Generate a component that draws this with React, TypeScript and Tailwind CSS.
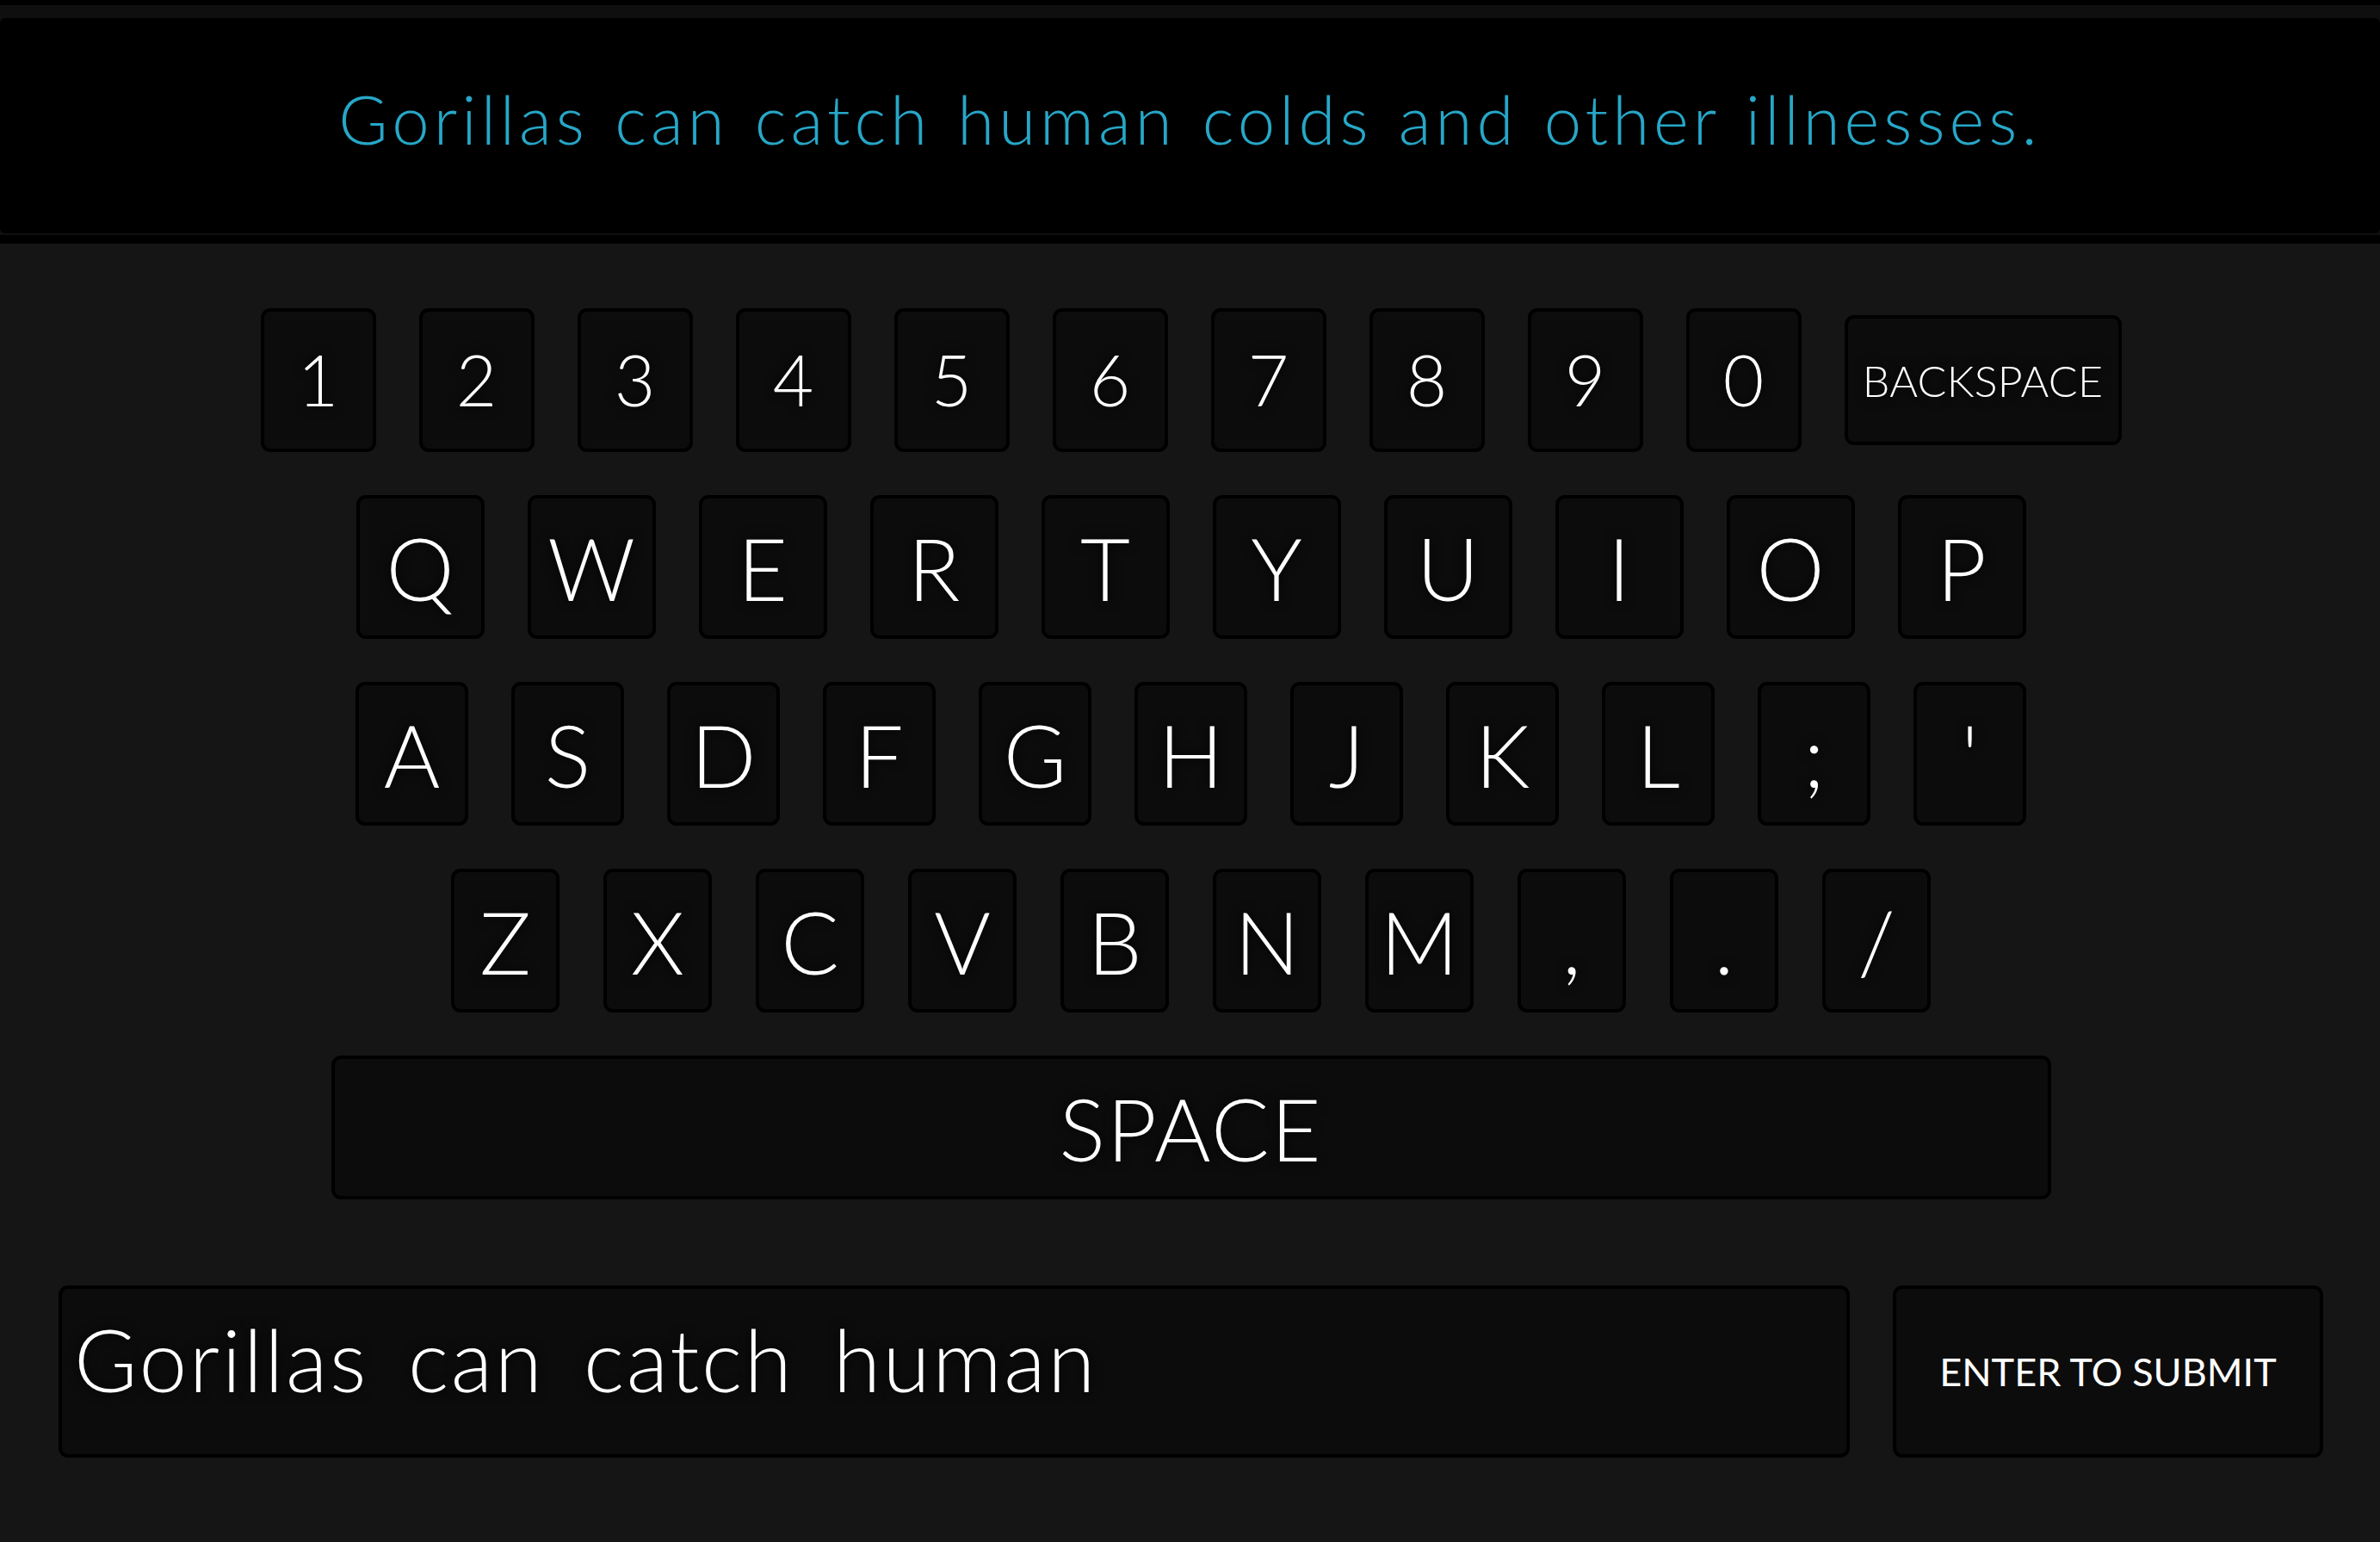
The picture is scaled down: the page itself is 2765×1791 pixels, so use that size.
import React from "react";

const numbers = ["1", "2", "3", "4", "5", "6", "7", "8", "9", "0"];
const row2 = ["Q", "W", "E", "R", "T", "Y", "U", "I", "O", "P"];
const row3 = ["A", "S", "D", "F", "G", "H", "J", "K", "L", ";", "'"];
const row4 = ["Z", "X", "C", "V", "B", "N", "M", ",", ".", "/"];

const keyBase =
  "flex items-center justify-center bg-[#0c0c0c] border-4 border-black rounded-[11px] text-white [text-shadow:0_0_14px_#000] leading-none";

export default function App() {
  return (
    <div className="w-[2765px] h-[1791px] bg-[#151515] overflow-hidden [font-family:Lato,'Open_Sans',sans-serif] flex flex-col">
      <div className="h-[6px] bg-black" />
      <div className="bg-[#0f0f0f] pt-[15px] pb-[2px]">
        <div className="h-[250px] bg-black rounded-[6px] flex items-center justify-center pb-[16px]">
          <span className="text-[#27a7c8] text-[78px] font-light tracking-[5px] [word-spacing:4px]">
            Gorillas can catch human colds and other illnesses.
          </span>
        </div>
      </div>
      <div className="h-[10px] bg-black" />

      <div className="flex flex-col items-center gap-[50px] pt-[75px] pl-[2px]">
        <div className="flex items-center h-[167px] gap-[50px]">
          {numbers.map((n) => (
            <div key={n} className={`${keyBase} w-[134px] h-[167px] text-[82px] font-light pb-[4px]`}>
              {n}
            </div>
          ))}
          <div className={`${keyBase} w-[322px] h-[151px] text-[50px] font-light tracking-[0.3px]`}>
            BACKSPACE
          </div>
        </div>
        <div className="flex items-center h-[167px] gap-[50px]">
          {row2.map((k) => (
            <div key={k} className={`${keyBase} w-[149px] h-[167px] text-[100px] font-light`}>
              {k}
            </div>
          ))}
        </div>
        <div className="flex items-center h-[167px] gap-[50px]">
          {row3.map((k) => (
            <div key={k} className={`${keyBase} w-[131px] h-[167px] text-[100px] font-light`}>
              {k}
            </div>
          ))}
        </div>
        <div className="flex items-center h-[167px] gap-[51px]">
          {row4.map((k) => (
            <div key={k} className={`${keyBase} w-[126px] h-[167px] text-[100px] font-light`}>
              {k}
            </div>
          ))}
        </div>
        <div className={`${keyBase} w-[1998px] h-[167px] text-[100px] font-light tracking-[2px]`}>SPACE</div>
      </div>

      <div className="flex gap-[50px] pl-[68px] pr-[66px] mt-[100px]">
        <div className="flex-1 h-[200px] bg-[#0c0c0c] border-4 border-black rounded-[11px] flex items-center pl-[14px] pb-[30px]">
          <span className="text-white text-[100px] font-light leading-none tracking-[2.6px] [word-spacing:16px] [text-shadow:0_0_14px_#000]">
            Gorillas can catch human
          </span>
        </div>
        <div className="w-[500px] h-[200px] bg-[#0c0c0c] border-4 border-black rounded-[11px] flex items-center justify-center">
          <span className="text-white text-[45px] font-normal leading-none">ENTER TO SUBMIT</span>
        </div>
      </div>
    </div>
  );
}
